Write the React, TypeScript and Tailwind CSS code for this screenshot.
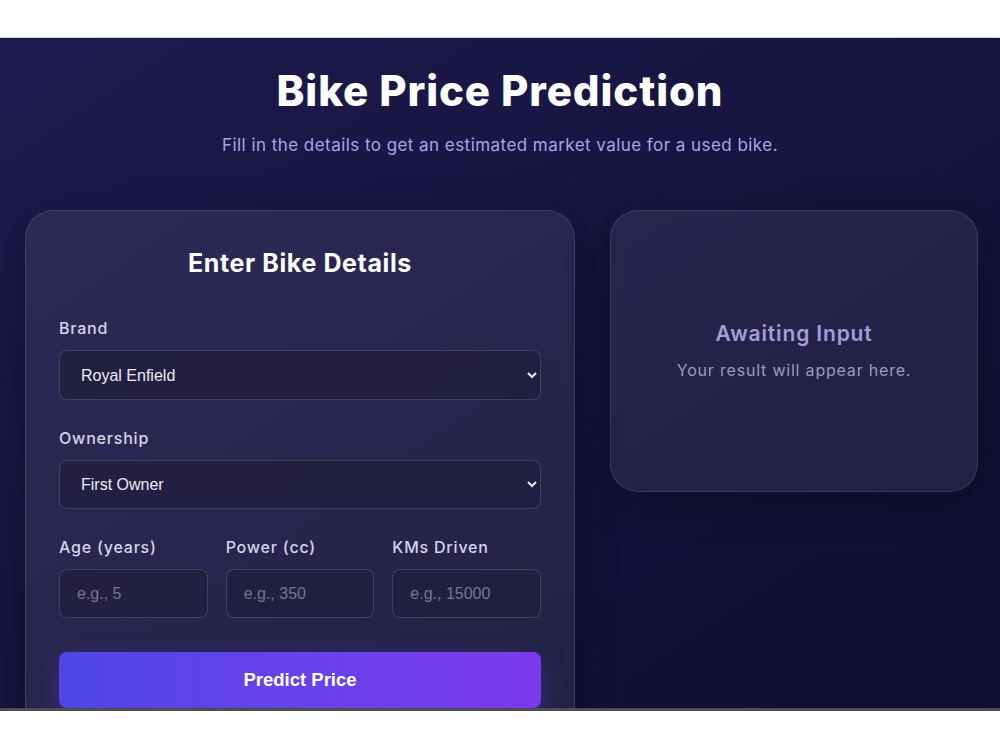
import React from "react";

const inputClass =
  "h-[49px] w-full rounded-lg border border-white/15 bg-[#201e3f]/80 px-[17px] text-[16px] text-[#ececf4] placeholder:text-[#77758f] outline-none font-[family-name:'Liberation_Sans',Arial,sans-serif]";

function Field({ label, children }: { label: string; children: React.ReactNode }) {
  return (
    <div className="flex flex-col">
      <label className="mb-[10px] text-[16px] leading-6 font-medium tracking-[0.8px] text-[#d6d4ea]">
        {label}
      </label>
      {children}
    </div>
  );
}

export default function App() {
  return (
    <div className="w-[1000px] h-[750px] bg-white overflow-hidden font-[family-name:Inter,'Noto_Sans',sans-serif]">
      <div className="h-[38px] bg-white border-b border-[#cfcfd8]" />
      <section className="h-[670px] overflow-hidden bg-gradient-to-br from-[#1e1b4e] to-[#0f0d31] pt-[29px]">
        <h1 className="text-center text-white text-[42px] leading-[48px] font-extrabold tracking-[0.9px]">
          Bike Price Prediction
        </h1>
        <p className="mt-[18px] text-center text-[#a9a4e6] text-[17px] leading-6 tracking-[0.45px]">
          Fill in the details to get an estimated market value for a used bike.
        </p>

        <div className="ml-[25px] mt-[53px] grid grid-cols-[550px_368px] gap-[35px] items-start">
          {/* form card */}
          <div className="rounded-[28px] border border-white/10 bg-white/[0.075] shadow-[0_10px_40px_rgba(0,0,0,0.35)] px-[33px] pt-[32px] pb-10">
            <h2 className="text-center text-white text-[25px] leading-[40px] font-bold tracking-[0.6px]">
              Enter Bike Details
            </h2>

            <div className="mt-[33px] flex flex-col gap-[26px]">
              <Field label="Brand">
                <select defaultValue="Royal Enfield" className={inputClass + " h-[50px]"}>
                  <option>Royal Enfield</option>
                  <option>Bajaj</option>
                  <option>Hero</option>
                  <option>Honda</option>
                  <option>Yamaha</option>
                </select>
              </Field>

              <Field label="Ownership">
                <select defaultValue="First Owner" className={inputClass}>
                  <option>First Owner</option>
                  <option>Second Owner</option>
                  <option>Third Owner</option>
                </select>
              </Field>

              <div className="grid grid-cols-3 gap-[18px]">
                <Field label="Age (years)">
                  <input placeholder="e.g., 5" className={inputClass} />
                </Field>
                <Field label="Power (cc)">
                  <input placeholder="e.g., 350" className={inputClass} />
                </Field>
                <Field label="KMs Driven">
                  <input placeholder="e.g., 15000" className={inputClass} />
                </Field>
              </div>
            </div>

            <button className="mt-[34px] h-[56px] w-full rounded-lg bg-gradient-to-r from-[#4f46e5] to-[#7c3aed] text-white text-[18.5px] font-bold shadow-[0_8px_24px_rgba(99,70,230,0.35)] font-[family-name:'Liberation_Sans',Arial,sans-serif]">
              Predict Price
            </button>
          </div>

          {/* result card */}
          <div className="h-[282px] rounded-[28px] border border-white/10 bg-white/[0.07] shadow-[0_10px_40px_rgba(0,0,0,0.35)] flex flex-col items-center justify-center">
            <h3 className="text-[21px] leading-7 font-semibold tracking-[0.85px] text-[#a39ed9]">
              Awaiting Input
            </h3>
            <p className="mt-[10px] text-[16px] leading-6 tracking-[0.8px] text-[#9c9ab8]">
              Your result will appear here.
            </p>
          </div>
        </div>
      </section>
      <div className="h-[3px] bg-[#4d4d52]" />
    </div>
  );
}
